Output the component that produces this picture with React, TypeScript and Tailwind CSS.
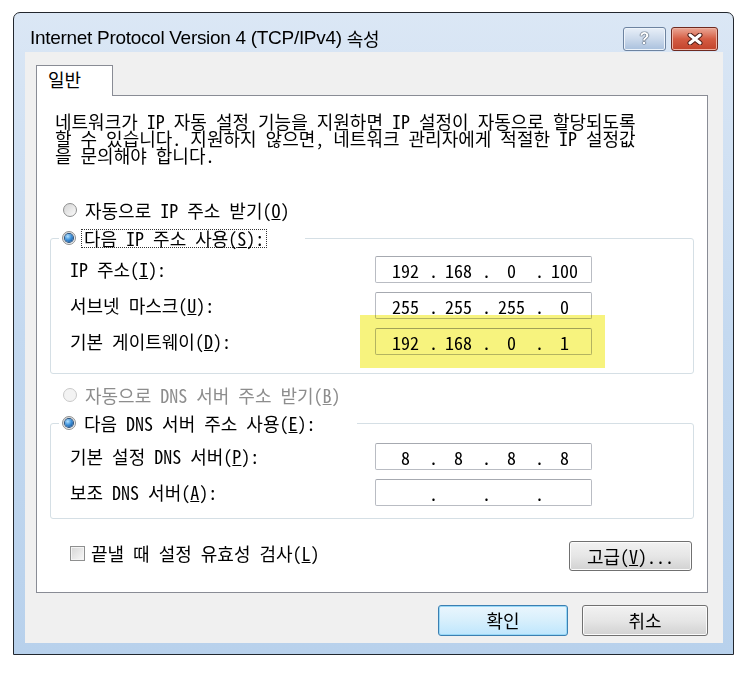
import React from 'react';

const kr = 'font-["Noto_Sans_Mono_CJK_KR","Noto_Sans_CJK_KR",sans-serif]';

function Radio({ checked, disabled }: { checked?: boolean; disabled?: boolean }) {
  return (
    <span
      className={`flex h-[14px] w-[14px] shrink-0 items-center justify-center rounded-full border ${
        disabled
          ? 'border-[#c9c9c9] bg-[#f3f3f3]'
          : 'border-[#8e8f8f] bg-gradient-to-br from-[#d4d4d4] to-[#fbfbfb]'
      }`}
    >
      {checked && (
        <span className="h-[8px] w-[8px] rounded-full bg-[radial-gradient(circle_at_35%_30%,#b4e2ff_0%,#3f93dc_45%,#0c3f80_100%)] shadow-[0_0_0_1px_#254f7c]" />
      )}
    </span>
  );
}

function IpField({ parts }: { parts: string[] }) {
  return (
    <div className="flex h-[27px] w-[217px] items-center rounded-[2px] border border-[#b9bcc3] border-t-[#a6a9b0] bg-white pl-[6px] leading-none">
      {parts.map((p, i) => (
        <React.Fragment key={i}>
          {i > 0 && <span className="w-[6px] text-center">.</span>}
          <span className="w-[47px] text-center">{p}</span>
        </React.Fragment>
      ))}
    </div>
  );
}

function Row({ label, parts, highlight }: { label: React.ReactNode; parts: string[]; highlight?: boolean }) {
  return (
    <div className="flex h-[27px] items-center">
      <div className="w-[305px] whitespace-nowrap">{label}</div>
      <div className="relative">
        <IpField parts={parts} />
        {highlight && (
          <div className="pointer-events-none absolute -bottom-[13px] -left-[15px] -right-[13px] -top-[13px] bg-[#f7f37e] mix-blend-multiply" />
        )}
      </div>
    </div>
  );
}

function WinButton({ children, primary, width }: { children: React.ReactNode; primary?: boolean; width: string }) {
  return (
    <button
      className={`${width} flex h-full items-center justify-center rounded-[3px] border ${
        primary
          ? 'border-[#3c7fb1] bg-gradient-to-b from-[#eaf6fd] via-[#d7effc] to-[#bee6fd] shadow-[inset_0_0_0_1px_#98d8f7]'
          : 'border-[#707070] bg-gradient-to-b from-[#f2f2f2] via-[#e6e6e6] to-[#d2d2d2] shadow-[inset_0_0_0_1px_#fbfbfb]'
      }`}
    >
      {children}
    </button>
  );
}

export default function App() {
  return (
    <div className={`h-[680px] w-[747px] overflow-hidden bg-white pl-[13px] pt-[12px] text-[18px] text-black ${kr}`}>
      {/* window */}
      <div className="flex h-[643px] w-[721px] flex-col rounded-t-[7px] border border-[#22272e] bg-gradient-to-b from-[#dbe7f5] via-[#c4d9f0] to-[#b8d1ec]">
        {/* title bar */}
        <div className="flex h-[39px] shrink-0 items-end justify-between pb-[1px] pl-[16px] pr-[15px]">
          <div className="flex h-[23px] items-center pb-[2px] font-['Liberation_Sans',sans-serif] text-[19px] tracking-[-0.3px] whitespace-nowrap">
            Internet Protocol Version 4 (TCP/IPv4) <span className={`ml-[5px] ${kr} text-[18px]`}>속성</span>
          </div>
          <div className="flex gap-[5px]">
            <div className="flex h-[24px] w-[43px] items-center justify-center rounded-[3px] border border-[#6d83a0] bg-gradient-to-b from-[#e8eff8] via-[#cbd9eb] to-[#a9c0dd] shadow-[inset_0_0_0_1px_#eef4fb]">
              <span className="font-['Liberation_Sans',sans-serif] text-[16px] font-bold leading-none text-white [text-shadow:0_0_1px_#2e3d52,0_0_1px_#2e3d52,0_0_1px_#2e3d52]">
                ?
              </span>
            </div>
            <div className="flex h-[24px] w-[47px] items-center justify-center rounded-[3px] border border-[#6f2a20] bg-gradient-to-b from-[#eaa796] via-[#d45c43] to-[#c2432b] shadow-[inset_0_0_0_1px_#eeb3a4]">
              <svg width="16" height="12" viewBox="0 0 16 12">
                <path d="M3 2 L13 10 M13 2 L3 10" stroke="#4a1a14" strokeWidth="5" strokeLinecap="round" />
                <path d="M3 2 L13 10 M13 2 L3 10" stroke="#ffffff" strokeWidth="3" strokeLinecap="round" />
              </svg>
            </div>
          </div>
        </div>

        {/* client area */}
        <div className="mb-[11px] ml-[11px] mr-[10px] flex flex-1 flex-col bg-[#f0f0f0] pl-[11px] pr-[15px] pt-[13px]">
          {/* tabs */}
          <div className="flex">
            <div className="relative z-10 -mb-px h-[31px] w-[77px] border border-b-0 border-[#898c95] bg-white pl-[11px] pt-[2px] leading-[22px]">
              일반
            </div>
          </div>

          {/* panel */}
          <div className="flex h-[498px] flex-col border border-[#898c95] bg-white">
            <p className="whitespace-nowrap pl-[18px] pt-[17px] leading-[17px]">
              네트워크가 IP 자동 설정 기능을 지원하면 IP 설정이 자동으로 할당되도록
              <br />
              할 수 있습니다. 지원하지 않으면, 네트워크 관리자에게 적절한 IP 설정값
              <br />
              을 문의해야 합니다.
            </p>

            <div className="mt-[36px] flex h-[20px] items-center gap-[8px] pl-[26px]">
              <Radio />
              <span>
                자동으로 IP 주소 받기(<u>O</u>)
              </span>
            </div>

            <fieldset className="mx-[13px] mt-[8px] rounded-[3px] border border-[#d5dfe5] pb-[18px] pl-[19px] pt-[8px]">
              <legend className="-ml-[11px] flex h-[20px] items-center pl-[3px] pr-[38px]">
                <Radio checked />
                <span className="ml-[5px] border border-dotted border-[#333] px-[2px] leading-[17px]">
                  다음 IP 주소 사용(<u>S</u>):
                </span>
              </legend>
              <div className="flex flex-col gap-[9px]">
                <Row label={<>IP 주소(<u>I</u>):</>} parts={['192', '168', '0', '100']} />
                <Row label={<>서브넷 마스크(<u>U</u>):</>} parts={['255', '255', '255', '0']} />
                <Row label={<>기본 게이트웨이(<u>D</u>):</>} parts={['192', '168', '0', '1']} highlight />
              </div>
            </fieldset>

            <div className="mt-[11px] flex h-[20px] items-center gap-[8px] pl-[26px] text-[#8d8d8d]">
              <Radio disabled />
              <span>
                자동으로 DNS 서버 주소 받기(<u>B</u>)
              </span>
            </div>

            <fieldset className="mx-[13px] mt-[8px] rounded-[3px] border border-[#d5dfe5] pb-[12px] pl-[19px] pt-[10px]">
              <legend className="-ml-[11px] flex h-[20px] items-center pl-[3px] pr-[42px]">
                <Radio checked />
                <span className="ml-[8px]">
                  다음 DNS 서버 주소 사용(<u>E</u>):
                </span>
              </legend>
              <div className="flex flex-col gap-[9px]">
                <Row label={<>기본 설정 DNS 서버(<u>P</u>):</>} parts={['8', '8', '8', '8']} />
                <Row label={<>보조 DNS 서버(<u>A</u>):</>} parts={['', '', '', '']} />
              </div>
            </fieldset>

            <div className="mt-[22px] flex h-[30px] items-center justify-between pl-[33px] pr-[15px]">
              <div className="flex items-center gap-[6px] pb-[6px]">
                <span className="h-[15px] w-[15px] border border-[#8e8f8f] bg-gradient-to-br from-[#d6d6d6] to-[#f8f8f8] shadow-[inset_0_0_0_1px_#f4f4f4]" />
                <span>
                  끝낼 때 설정 유효성 검사(<u>L</u>)
                </span>
              </div>
              <WinButton width="w-[123px]">
                고급(<u>V</u>)...
              </WinButton>
            </div>
          </div>

          {/* dialog buttons */}
          <div className="mt-[12px] flex h-[31px] justify-end gap-[14px]">
            <WinButton primary width="w-[130px]">
              확인
            </WinButton>
            <WinButton width="w-[126px]">취소</WinButton>
          </div>
        </div>
      </div>
    </div>
  );
}
